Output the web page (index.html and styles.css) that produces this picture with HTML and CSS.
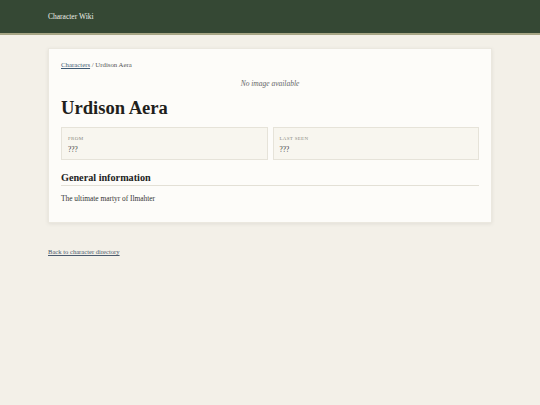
FILE: index.html
```html
<!DOCTYPE html>
<html lang="en">
<head>
<meta charset="utf-8">
<title>Urdison Aera – Character Wiki</title>
<link rel="stylesheet" href="styles.css">
</head>
<body>
<header class="site-header">
  <div class="wrap"><a class="brand" href="#">Character Wiki</a></div>
</header>
<main class="wrap">
  <article class="card">
    <nav class="crumbs"><a href="#">Characters</a> / Urdison Aera</nav>
    <p class="no-image">No image available</p>
    <h1 class="title">Urdison Aera</h1>
    <div class="facts">
      <div class="fact"><div class="fact-label">From</div><div class="fact-value">???</div></div>
      <div class="fact"><div class="fact-label">Last seen</div><div class="fact-value">???</div></div>
    </div>
    <h2 class="section-title">General information</h2>
    <p class="section-text">The ultimate martyr of Ilmahter</p>
  </article>
  <a class="back" href="#">Back to character directory</a>
</main>
</body>
</html>
```
FILE: styles.css
```css
* { box-sizing: border-box; }
html, body { margin: 0; padding: 0; }
body {
  background: #f3f0e8;
  font-family: "Liberation Serif", "Times New Roman", serif;
  color: #2a2a26;
  min-height: 405px;
}
.wrap { width: 444px; margin: 0 auto; }
.site-header {
  background: #354834;
  border-bottom: 2px solid #a7a685;
  height: 35px;
}
.site-header .wrap { display: flex; align-items: center; height: 33px; }
.brand { color: #eef0e8; text-decoration: none; font-size: 7.5px; }
main.wrap { padding-top: 13px; }
.card {
  background: #fdfcf9;
  border: 1px solid #ebe8df;
  box-shadow: 0 1px 4px rgba(0,0,0,0.08);
  padding: 11px 12px 19px;
}
.crumbs { font-size: 6.8px; color: #555; line-height: 8px; margin-top: 1px; }
.crumbs a { color: #3f5a74; }
.no-image {
  margin: 11px 0 0;
  text-align: center;
  font-style: italic;
  font-size: 7.5px;
  color: #666;
  line-height: 8px;
}
.title {
  margin: 9px 0 0;
  font-size: 18.6px;
  line-height: 22px;
  color: #1f1f1c;
}
.facts {
  display: grid;
  grid-template-columns: 1fr 1fr;
  gap: 5px;
  margin-top: 8px;
}
.fact {
  background: #f8f6ef;
  border: 1px solid #e6e3d9;
  height: 33px;
  padding: 8px 6px 0;
}
.fact-label {
  text-transform: uppercase;
  font-size: 5px;
  letter-spacing: 0.3px;
  color: #8a8a82;
  line-height: 6px;
}
.fact-value { font-size: 7.2px; color: #333; margin-top: 4px; line-height: 8px; }
.section-title {
  margin: 12px 0 0;
  font-size: 10.2px;
  line-height: 12px;
  padding-bottom: 1px;
  border-bottom: 1px solid #e3e0d6;
  color: #222;
}
.section-text {
  margin: 9px 0 0;
  font-size: 7.4px;
  line-height: 8px;
  color: #333;
}
.back {
  display: inline-block;
  margin-top: 25px;
  font-size: 6.6px;
  color: #4a5a6e;
}
```
